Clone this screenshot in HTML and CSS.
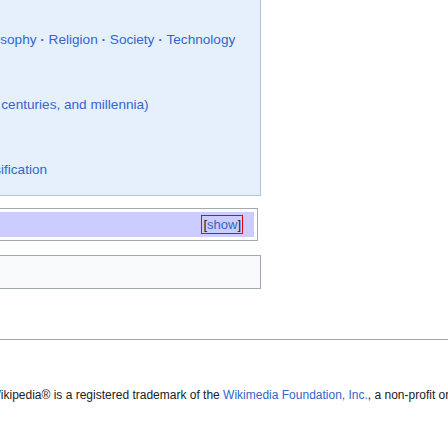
FILE: index.html
```html
<!DOCTYPE html>
<html lang="en">
<head>
<meta charset="utf-8">
<title>Portal</title>
<link rel="stylesheet" href="styles.css">
</head>
<body>
<div class="page">
  <div class="portal">
    <ul class="hlist l1">
      <li><a href="#">Philosophy</a></li>
      <li><a href="#">Religion</a></li>
      <li><a href="#">Society</a></li>
      <li><a href="#">Technology</a></li>
    </ul>
    <p class="pline l2"><a href="#">(years, decades, centuries, and millennia)</a></p>
    <p class="pline l3"><a href="#">Classification</a></p>
  </div>

  <div class="navbox">
    <div class="navbox-title">
      <span class="toggle">[<a href="#">show</a>]</span>
    </div>
  </div>

  <div class="authority"></div>

  <div class="footer">
    <p class="trademark">Wikipedia® is a registered trademark of the <a href="#">Wikimedia Foundation, Inc.</a>, a non-profit organization.</p>
  </div>
</div>
</body>
</html>
```

FILE: styles.css
```css
html, body {
  margin: 0;
  padding: 0;
  background: #ffffff;
  overflow: hidden;
}

body {
  font-family: "Liberation Sans", Arial, sans-serif;
  color: #202122;
}

a {
  color: #3366cc;
  text-decoration: none;
}

.page {
  width: 448px;
}

.portal {
  width: 260px;
  background: #e6f0fd;
  border-right: 1px solid #b4c3dc;
  border-bottom: 1px solid #b4c3dc;
  padding: 30px 0 15px 0;
  display: flex;
  flex-direction: column;
  gap: 45px;
  font-size: 13.6px;
  line-height: 20px;
  white-space: nowrap;
}

.hlist {
  list-style: none;
  margin: 0;
  padding: 0;
  display: flex;
}

.hlist li::after {
  content: "\00a0·\00a0";
  font-weight: bold;
  color: #3366cc;
}

.hlist li:last-child::after {
  content: "";
}

.pline {
  margin: 0;
}

.l1 { margin-left: -30px; }
.l2 { text-indent: -103px; }
.l3 { text-indent: -33px; }

.navbox {
  width: 254px;
  margin-top: 12px;
  border: 1px solid #a2a9b1;
  border-left: 0;
  padding: 3px 3px 3px 0;
}

.navbox-title {
  height: 25px;
  background: #ccccff;
  display: flex;
  align-items: center;
  justify-content: flex-end;
  padding-right: 11px;
}

.toggle {
  font-size: 13px;
  line-height: 17px;
  border: 1px solid #ee0000;
  padding: 0 1px 0 1px;
  color: #202122;
}

.authority {
  width: 260px;
  height: 32px;
  margin-top: 14px;
  background: #f8f9fa;
  border: 1px solid #a2a9b1;
  border-left: 0;
}

.footer {
  margin-top: 50px;
  border-top: 1px solid #a2a9b1;
  padding-top: 47px;
}

.trademark {
  margin: 0;
  font-size: 12px;
  line-height: 16px;
  white-space: nowrap;
  text-indent: -10.5px;
}
```
